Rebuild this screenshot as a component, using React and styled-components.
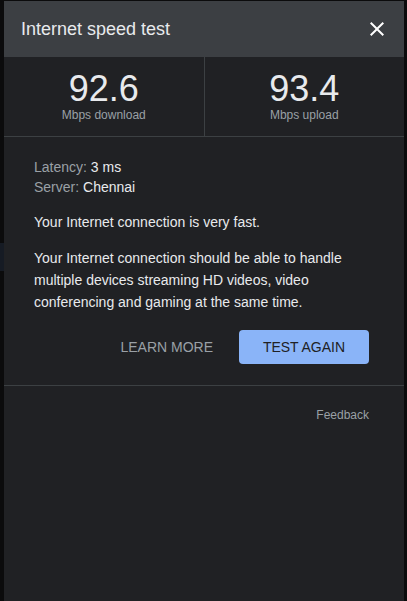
import React from "react";
import styled, { createGlobalStyle } from "styled-components";

const GlobalStyle = createGlobalStyle`
  html, body {
    margin: 0;
    padding: 0;
    background: #0b0b0c;
    font-family: "Liberation Sans", Arial, sans-serif;
  }
`;

// page behind the dialog, only a thin strip of it shows
const Page = styled.div`
  display: flex;
  height: 601px;
  overflow: hidden;
`;

const Backdrop = styled.div`
  width: 4px;
  display: flex;
  flex-direction: column;
`;

const BackdropBlock = styled.div`
  margin-top: ${(p) => p.top}px;
  height: ${(p) => p.size}px;
  background: ${(p) => p.color};
`;

const Dialog = styled.div`
  width: 400px;
  margin-top: 1px;
  background: #202124;
  display: flex;
  flex-direction: column;
  color: #e8eaed;
`;

const Header = styled.div`
  height: 56px;
  background: #3c3f43;
  display: flex;
  align-items: center;
  justify-content: space-between;
  padding: 0 15px 0 17px;
`;

const Title = styled.div`
  font-size: 18px;
  color: #e8eaed;
`;

const CloseButton = styled.button`
  width: 24px;
  height: 24px;
  padding: 0;
  border: none;
  background: none;
  display: flex;
  color: #ffffff;
  cursor: pointer;
`;

const Stats = styled.div`
  display: flex;
  height: 79px;
  border-bottom: 1px solid #3c4043;
`;

const Stat = styled.div`
  flex: 1;
  display: flex;
  flex-direction: column;
  align-items: center;
  justify-content: center;
  border-right: ${(p) => (p.divider ? "1px solid #3c4043" : "none")};
`;

const StatValue = styled.div`
  font-size: 36px;
  line-height: 36px;
  color: #e8eaed;
`;

const StatLabel = styled.div`
  font-size: 12px;
  line-height: 14px;
  margin-top: 1px;
  color: #9aa0a6;
`;

const Body = styled.div`
  padding: 20px 35px 21px 30px;
  font-size: 14px;
`;

const InfoLine = styled.div`
  line-height: 20px;
`;

const Muted = styled.span`
  color: #9aa0a6;
`;

const Paragraph = styled.p`
  margin: ${(p) => p.gap}px 0 0;
  line-height: 22px;
`;

const Actions = styled.div`
  display: flex;
  justify-content: flex-end;
  align-items: center;
  gap: 10px;
  margin-top: 17px;
`;

const TextButton = styled.button`
  height: 34px;
  padding: 0 16px;
  border: none;
  background: none;
  color: #9aa0a6;
  font-family: inherit;
  font-size: 14px;
  text-transform: uppercase;
`;

const PrimaryButton = styled.button`
  height: 34px;
  width: 130px;
  padding: 0;
  border: none;
  border-radius: 4px;
  background: #8ab4f8;
  color: #202124;
  font-family: inherit;
  font-size: 14px;
  text-transform: uppercase;
`;

const Footer = styled.div`
  border-top: 1px solid #3c4043;
  padding: 21px 35px 0 0;
  display: flex;
  justify-content: flex-end;
`;

const FeedbackLink = styled.span`
  font-size: 12px;
  line-height: 16px;
  color: #9aa0a6;
`;

const CloseIcon = () => (
  <svg width="24" height="24" viewBox="0 0 24 24" fill="currentColor">
    <path d="M19 6.41L17.59 5 12 10.59 6.41 5 5 6.41 10.59 12 5 17.59 6.41 19 12 13.41 17.59 19 19 17.59 13.41 12z" />
  </svg>
);

const stats = [
  { value: "92.6", label: "Mbps download" },
  { value: "93.4", label: "Mbps upload" },
];

export default function App() {
  return (
    <>
      <GlobalStyle />
      <Page>
        <Backdrop>
          <BackdropBlock top={243} size={28} color="#161b24" />
        </Backdrop>
        <Dialog>
          <Header>
            <Title>Internet speed test</Title>
            <CloseButton aria-label="Close">
              <CloseIcon />
            </CloseButton>
          </Header>
          <Stats>
            {stats.map((s, i) => (
              <Stat key={s.label} divider={i === 0}>
                <StatValue>{s.value}</StatValue>
                <StatLabel>{s.label}</StatLabel>
              </Stat>
            ))}
          </Stats>
          <Body>
            <InfoLine>
              <Muted>Latency: </Muted>3 ms
            </InfoLine>
            <InfoLine>
              <Muted>Server: </Muted>Chennai
            </InfoLine>
            <Paragraph gap={14}>Your Internet connection is very fast.</Paragraph>
            <Paragraph gap={14}>
              Your Internet connection should be able to handle multiple
              devices streaming HD videos, video conferencing and gaming at the
              same time.
            </Paragraph>
            <Actions>
              <TextButton>Learn more</TextButton>
              <PrimaryButton>Test again</PrimaryButton>
            </Actions>
          </Body>
          <Footer>
            <FeedbackLink>Feedback</FeedbackLink>
          </Footer>
        </Dialog>
      </Page>
    </>
  );
}
